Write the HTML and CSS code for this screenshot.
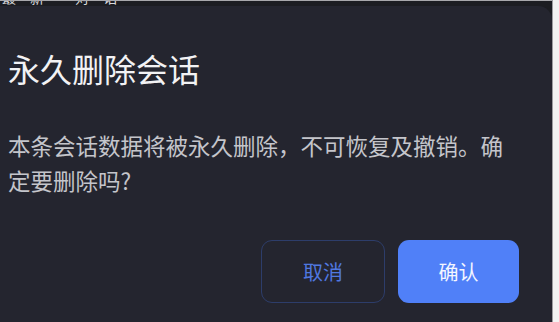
FILE: index.html
```html
<!DOCTYPE html>
<html lang="zh-CN">
<head>
<meta charset="utf-8">
<title>永久删除会话</title>
<link rel="stylesheet" href="styles.css">
</head>
<body>
<div class="page">
  <div class="main">
    <div class="topbar"><span class="topbar-text">最新 对话</span></div>
    <section class="dialog">
      <h1 class="dialog-title">永久删除会话</h1>
      <p class="dialog-body">本条会话数据将被永久删除，不可恢复及撤销。确定要删除吗?</p>
      <div class="dialog-actions">
        <button class="btn btn-cancel">取消</button>
        <button class="btn btn-confirm">确认</button>
      </div>
    </section>
  </div>
  <div class="edge"></div>
</div>
</body>
</html>
```
FILE: styles.css
```css
html, body {
  margin: 0;
  padding: 0;
  width: 559px;
  height: 322px;
  overflow: hidden;
  background: #1c1d22;
  font-family: "Noto Sans CJK SC", "Noto Sans", sans-serif;
}

.page {
  display: flex;
  height: 322px;
}

.main {
  width: 552px;
  display: flex;
  flex-direction: column;
  background: #1c1d22;
}

.topbar {
  height: 6px;
  overflow: hidden;
  border-top: 1px solid #a8a8ac;
  box-sizing: border-box;
}

.topbar-text {
  display: block;
  margin-top: -12px;
  padding-left: 2px;
  font-size: 14px;
  line-height: 16px;
  color: #d8d8dc;
  letter-spacing: 14px;
}

.dialog {
  flex: 1;
  background: #24252f;
  border-radius: 0 14px 0 0;
  padding: 40px 33px 0 8px;
  display: flex;
  flex-direction: column;
}

.dialog-title {
  margin: 0;
  font-size: 32px;
  line-height: 44px;
  font-weight: 400;
  color: #f2f2f4;
}

.dialog-body {
  margin: 38px 0 0 0;
  font-size: 22.5px;
  line-height: 35px;
  color: #c4c5cb;
}

.dialog-actions {
  margin-top: 42px;
  display: flex;
  justify-content: flex-end;
  gap: 13px;
}

.btn {
  height: 63px;
  border-radius: 11px;
  font-family: "Noto Sans CJK SC", "Noto Sans", sans-serif;
  font-size: 20px;
  font-weight: 400;
  padding: 0;
  box-sizing: border-box;
}

.btn-cancel {
  width: 124px;
  background: transparent;
  border: 1px solid #2d3d6a;
  color: #5078e0;
}

.btn-confirm {
  width: 121px;
  background: #5080f8;
  border: none;
  color: #f4f6ff;
}

.edge {
  flex: 1;
  background: #f2f2f2;
  border-left: 1px solid #9c9ca0;
}
```
